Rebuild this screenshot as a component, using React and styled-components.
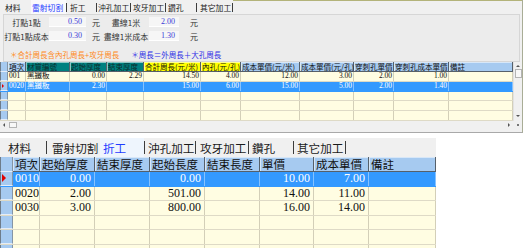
import styled, { createGlobalStyle } from 'styled-components';

const CJK = '"Noto Sans CJK TC", "Noto Sans", sans-serif';
const NUM = '"Liberation Serif", "Noto Sans CJK TC", serif';

const GlobalStyle = createGlobalStyle`
  html, body {
    margin: 0;
    padding: 0;
    background: #ffffff;
  }
  body {
    font-family: ${CJK};
    color: #111;
  }
`;

// tab strips, the top one is the same control at 2/3 size
const topTabs = [
  { label: '材料', w: 31, pl: 5 },
  { label: '雷射切割', w: 35, pl: 1, active: true, sep: true },
  { label: '折工', w: 29, pl: 3, sep: true },
  { label: '沖孔加工', w: 33, pl: 1, sep: true },
  { label: '攻牙加工', w: 34, pl: 2, sep: true },
  { label: '鑽孔', w: 30, pl: 2, sep: true },
  { label: '其它加工', w: 35, pl: 3, sep: true },
];

const bottomTabs = [
  { label: '材料', w: 46, pl: 8, sep: true },
  { label: '雷射切割', w: 53, pl: 5 },
  { label: '折工', w: 44, pl: 3, active: true, sep: true },
  { label: '沖孔加工', w: 50, pl: 3, sep: true },
  { label: '攻牙加工', w: 52, pl: 4, sep: true },
  { label: '鑽孔', w: 44, pl: 3, sep: true },
  { label: '其它加工', w: 51, pl: 3, sep: true },
];

const BLUE = '#a6caf0';
const TEAL = '#008080';
const YELLOW = '#ffff00';

const topCols = [
  { label: '項次', w: 18, bg: BLUE },
  { label: '材質編號', w: 44, bg: TEAL, fg: '#0c2c2c' },
  { label: '起始厚度', w: 37, bg: TEAL, fg: '#0c2c2c', num: true },
  { label: '結束厚度', w: 37, bg: TEAL, fg: '#0c2c2c', num: true },
  { label: '合計周長(元/米)', w: 57, bg: YELLOW, num: true },
  { label: '內孔(元/孔)', w: 40, bg: YELLOW, num: true },
  { label: '成本單價(元/米)', w: 59, bg: BLUE, num: true },
  { label: '成本單價(元/孔)', w: 54, bg: BLUE, num: true },
  { label: '穿刺孔單價', w: 40, bg: BLUE, num: true },
  { label: '穿刺孔成本單價', w: 55, bg: BLUE, num: true },
  { label: '備註', w: 64, bg: BLUE },
];

const topRows = [
  ['001', '黑鐵板', '0.00', '2.29', '14.50', '4.00', '12.00', '3.00', '2.00', '1.00', ''],
  ['0020', '黑鐵板', '2.30', '', '15.00', '6.00', '15.00', '5.00', '2.00', '1.40', ''],
  [], [], [],
];

const bottomCols = [
  { label: '項次', w: 27 },
  { label: '起始厚度', w: 55, num: true },
  { label: '結束厚度', w: 55, num: true },
  { label: '起始長度', w: 55, num: true },
  { label: '結束長度', w: 55, num: true },
  { label: '單價', w: 54, num: true },
  { label: '成本單價', w: 55, num: true },
  { label: '備註', w: 67 },
];

const bottomRows = [
  ['0010', '0.00', '', '0.00', '', '10.00', '7.00', ''],
  ['0020', '2.00', '', '501.00', '', '14.00', '11.00', ''],
  ['0030', '3.00', '', '800.00', '', '16.00', '14.00', ''],
  [], [], [],
];

const App = () => {
  return (
    <>
      <GlobalStyle />
      <Page>
        <TopPane>
          <TabBar tabs={topTabs} height={14} fontSize={7.8} sepH={9} activeBg="#f9f9fb" line />

          <FormPanel>
            <FormRow>
              <FieldLabel $w={45}>打點1點</FieldLabel>
              <FieldBox $w={37}>0.50</FieldBox>
              <Unit $ml={6} $w={11}>元</Unit>
              <FieldLabel $w={46}>畫線1米</FieldLabel>
              <FieldBox $w={30}>2.00</FieldBox>
              <Unit $ml={11} $w={10}>元</Unit>
            </FormRow>
            <FormRow>
              <FieldLabel $w={45}>打點1點成本</FieldLabel>
              <FieldBox $w={37}>0.30</FieldBox>
              <Unit $ml={6} $w={11}>元</Unit>
              <FieldLabel $w={46}>畫線1米成本</FieldLabel>
              <FieldBox $w={30}>1.30</FieldBox>
              <Unit $ml={11} $w={10}>元</Unit>
            </FormRow>
            <NoteRow>
              <Note $color="#ff8a1c">＊合計周長含內孔周長+攻牙周長</Note>
              <Note $color="#2f2fe6">＊周長＝外周長＋大孔周長</Note>
            </NoteRow>
          </FormPanel>

          <MiniGrid>
            <MiniBody>
              <HeadRow $h={10} $fs={7.5}>
                <Indicator $w={8} />
                {topCols.map(c => (
                  <HeadCell key={c.label} $w={c.w} $bg={c.bg} $fg={c.fg} $mini>
                    {c.label}
                  </HeadCell>
                ))}
              </HeadRow>
              <RowArea>
                {topRows.map((r, i) => (
                  <Row key={i} $h={9.8} $fs={7.5} $sel={i === 1}>
                    <Indicator $w={8}>{i === 1 && <Pointer $s={2.6} />}</Indicator>
                    {topCols.map((c, j) => (
                      <Cell key={j} $w={c.w} $num={c.num} $sel={i === 1} $mini>
                        {r[j]}
                      </Cell>
                    ))}
                  </Row>
                ))}
              </RowArea>
              <HScroll>
                <Arrow $dir="left" />
                <Thumb $w={8} $h={6} />
                <ScrollFill />
                <Arrow $dir="right" />
              </HScroll>
            </MiniBody>
            <VScrollCol>
              <VScroll>
                <Arrow $dir="up" />
                <Thumb $w={7} $h={9} />
                <ScrollFill />
                <Arrow $dir="down" />
              </VScroll>
              <Corner>
                <Dot />
              </Corner>
            </VScrollCol>
          </MiniGrid>
        </TopPane>

        <BottomPane>
          <TabBar tabs={bottomTabs} height={19} fontSize={11.6} sepH={13} activeBg="#eef5fd" />
          <HeadRow $h={15} $fs={11.5}>
            <Indicator $w={13} />
            {bottomCols.map(c => (
              <HeadCell key={c.label} $w={c.w} $bg={BLUE}>
                {c.label}
              </HeadCell>
            ))}
          </HeadRow>
          <RowArea>
            {bottomRows.map((r, i) => (
              <Row key={i} $h={14.5} $fs={12} $sel={i === 0}>
                <Indicator $w={13}>{i === 0 && <Pointer $s={4} />}</Indicator>
                {bottomCols.map((c, j) => (
                  <Cell key={j} $w={c.w} $num={c.num} $sel={i === 0}>
                    {r[j]}
                  </Cell>
                ))}
              </Row>
            ))}
          </RowArea>
        </BottomPane>
      </Page>
    </>
  );
};

const TabBar = ({ tabs, height, fontSize, sepH, activeBg, line }) => (
  <TabStrip $h={height} $fs={fontSize}>
    {tabs.map(t => (
      <TabGroup key={t.label}>
        <Tab $w={t.w} $pl={t.pl} $active={t.active} $activeBg={activeBg}>
          {t.label}
        </Tab>
        {t.sep && <TabSep $h={sepH} />}
      </TabGroup>
    ))}
    <TabFill $line={line} />
  </TabStrip>
);

export default App;

const Page = styled.div`
  width: 527px;
  height: 248px;
  overflow: hidden;
  background: #ffffff;
  display: flex;
  flex-direction: column;
`;

const TopPane = styled.div`
  width: 522px;
  height: 132px;
  flex-shrink: 0;
  background: #f0f0f0;
  border-right: 1px solid #a9ad96;
  border-bottom: 1px solid #a9a9a9;
  display: flex;
  flex-direction: column;
`;

const TabStrip = styled.div`
  display: flex;
  align-items: stretch;
  height: ${p => p.$h}px;
  flex-shrink: 0;
  background: #f0f0f0;
  font-family: ${CJK};
  font-size: ${p => p.$fs}px;
`;

const TabGroup = styled.div`
  display: flex;
  align-items: stretch;
`;

const Tab = styled.div`
  width: ${p => p.$w}px;
  padding-left: ${p => p.$pl}px;
  box-sizing: border-box;
  display: flex;
  align-items: center;
  white-space: nowrap;
  color: ${p => (p.$active ? '#1f3cff' : '#1a1a1a')};
  background: ${p => (p.$active ? p.$activeBg : 'transparent')};
`;

const TabSep = styled.div`
  width: 1px;
  height: ${p => p.$h}px;
  align-self: center;
  background: #3c3c3c;
`;

const TabFill = styled.div`
  flex: 1;
  border-top: ${p => (p.$line ? '1px solid #b3b37a' : 'none')};
`;

const FormPanel = styled.div`
  height: 48px;
  box-sizing: border-box;
  margin: 0 2px 0 3px;
  padding-top: 1px;
  border: 1px solid #d6d6d6;
  background: #ececec;
  display: flex;
  flex-direction: column;
  gap: 2px;
  font-size: 8px;
  flex-shrink: 0;
`;

const FormRow = styled.div`
  display: flex;
  align-items: center;
  height: 12px;
`;

const FieldLabel = styled.div`
  width: ${p => p.$w}px;
  text-align: center;
  color: #333;
  white-space: nowrap;
`;

const FieldBox = styled.div`
  width: ${p => p.$w}px;
  height: 10px;
  line-height: 10px;
  box-sizing: border-box;
  padding-right: 4px;
  background: #f6f6f6;
  border-bottom: 1px solid #ffffff;
  text-align: right;
  color: #3b3bd6;
  font-family: ${NUM};
`;

const Unit = styled.div`
  width: ${p => p.$w}px;
  margin-left: ${p => p.$ml}px;
  color: #333;
`;

const NoteRow = styled.div`
  display: flex;
  align-items: center;
  height: 12px;
  margin-top: 4px;
  padding-left: 6px;
  gap: 12px;
  font-size: 7.5px;
`;

const Note = styled.div`
  color: ${p => p.$color};
  white-space: nowrap;
`;

const MiniGrid = styled.div`
  display: flex;
  height: 66px;
  flex-shrink: 0;
`;

const MiniBody = styled.div`
  width: 513px;
  display: flex;
  flex-direction: column;
`;

const HeadRow = styled.div`
  display: flex;
  height: ${p => p.$h}px;
  line-height: ${p => p.$h - 1}px;
  font-size: ${p => p.$fs}px;
  flex-shrink: 0;
`;

const HeadCell = styled.div`
  width: ${p => p.$w}px;
  flex-shrink: 0;
  box-sizing: border-box;
  padding-left: ${p => (p.$mini ? 1 : 2)}px;
  background: ${p => p.$bg};
  color: ${p => p.$fg || '#111'};
  border-right: 1px solid #56606a;
  border-bottom: 1px solid #56606a;
  box-shadow: inset 1px 1px 0 rgba(255, 255, 255, 0.55);
  white-space: nowrap;
  font-family: ${CJK};
`;

const RowArea = styled.div`
  flex: 1;
  overflow: hidden;
  background: #fffde2;
`;

const Row = styled.div`
  display: flex;
  height: ${p => p.$h}px;
  line-height: ${p => p.$h - 1}px;
  box-sizing: border-box;
  font-size: ${p => p.$fs}px;
  font-family: ${NUM};
  background: ${p => (p.$sel ? '#3399ff' : '#fffde2')};
  color: ${p => (p.$sel ? '#ffffff' : '#111')};
  border-bottom: 1px solid ${p => (p.$sel ? '#3399ff' : '#dedac6')};
`;

const Cell = styled.div`
  width: ${p => p.$w}px;
  flex-shrink: 0;
  box-sizing: border-box;
  padding: 0 ${p => (p.$mini ? 1 : 3)}px 0 ${p => (p.$mini ? 1 : 2)}px;
  border-right: 1px solid ${p => (p.$sel ? '#86c2ff' : '#d3cfb8')};
  text-align: ${p => (p.$num ? 'right' : 'left')};
  white-space: nowrap;
`;

const Indicator = styled.div`
  width: ${p => p.$w}px;
  flex-shrink: 0;
  align-self: stretch;
  box-sizing: border-box;
  background: ${BLUE};
  border-left: 1px solid #6e7c8a;
  border-right: 1px solid #8595a5;
  border-bottom: 1px solid #e4edf8;
  display: flex;
  align-items: center;
  padding-left: 1px;
`;

const Pointer = styled.span`
  width: 0;
  height: 0;
  border-style: solid;
  border-color: transparent transparent transparent #e00000;
  border-width: ${p => p.$s}px 0 ${p => p.$s}px ${p => p.$s}px;
`;

const HScroll = styled.div`
  height: 7px;
  flex-shrink: 0;
  display: flex;
  align-items: center;
  gap: 4px;
  padding: 0 3px;
  background: #f0f0f0;
`;

const VScrollCol = styled.div`
  width: 9px;
  display: flex;
  flex-direction: column;
`;

const VScroll = styled.div`
  flex: 1;
  display: flex;
  flex-direction: column;
  align-items: center;
  gap: 2px;
  padding: 3px 0 4px;
  background: #f0f0f0;
  border-left: 1px solid #e2e2e2;
`;

const ScrollFill = styled.div`
  flex: 1;
`;

const Thumb = styled.div`
  width: ${p => p.$w}px;
  height: ${p => p.$h}px;
  box-sizing: border-box;
  background: #f8f8f8;
  border: 1px solid #b4b4b4;
  flex-shrink: 0;
`;

const Arrow = styled.span`
  width: 0;
  height: 0;
  flex-shrink: 0;
  border-style: solid;
  border-color: transparent;
  ${p =>
    p.$dir === 'up'
      ? 'border-width: 0 2px 2px 2px; border-bottom-color: #555;'
      : p.$dir === 'down'
      ? 'border-width: 2px 2px 0 2px; border-top-color: #555;'
      : p.$dir === 'left'
      ? 'border-width: 2px 2px 2px 0; border-right-color: #555;'
      : 'border-width: 2px 0 2px 2px; border-left-color: #555;'}
`;

const Corner = styled.div`
  height: 7px;
  background: #f0f0f0;
  display: flex;
  align-items: center;
  justify-content: center;
`;

const Dot = styled.span`
  width: 2px;
  height: 2px;
  background: #777;
`;

const BottomPane = styled.div`
  margin-top: 5px;
  width: 436px;
  flex: 1;
  display: flex;
  flex-direction: column;
`;
